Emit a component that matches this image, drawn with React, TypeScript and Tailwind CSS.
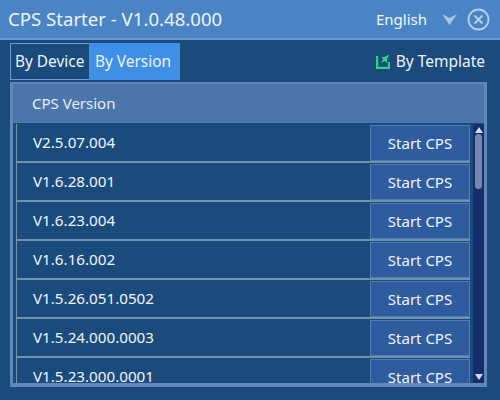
const versions = [
  "V2.5.07.004",
  "V1.6.28.001",
  "V1.6.23.004",
  "V1.6.16.002",
  "V1.5.26.051.0502",
  "V1.5.24.000.0003",
  "V1.5.23.000.0001",
];

function VersionRow({ version }: { version: string }) {
  return (
    <div className="flex h-[39px] shrink-0 border-b-2 border-[#6f94a8]">
      <div className="flex flex-1 items-center pl-[16px] text-[15.2px] text-[#f0f5fb]">{version}</div>
      <button className="mt-px h-[36px] w-[100px] border border-[#4d7db8] bg-[#2f5c9f] text-[15px] text-[#f0f5fb]">
        Start CPS
      </button>
    </div>
  );
}

export default function App() {
  return (
    <div className="flex h-[400px] w-[500px] flex-col overflow-hidden bg-[#1b4a7d] font-['Noto_Sans','Open_Sans',sans-serif]">
      {/* Title bar */}
      <div className="flex h-[40px] shrink-0 items-center border-b-2 border-[#6c9bcf] bg-[#4a84c4] pl-2 pr-[10px]">
        <div className="flex-1 text-[18.6px] text-[#eef4fb]">CPS Starter - V1.0.48.000</div>
        <span className="text-[15px] text-[#f2f7fc]">English</span>
        <svg className="ml-[15px]" width="15" height="11" viewBox="0 0 15 11">
          <path d="M0 0 L7.5 4 L15 0 L7.5 11 Z" fill="#a9c6e6" />
        </svg>
        <svg className="ml-[10px]" width="23" height="23" viewBox="0 0 23 23" fill="none" stroke="#b7cfe9">
          <circle cx="11.5" cy="11.5" r="10" strokeWidth="1.8" />
          <path d="M7.5 7.5 L15.5 15.5 M15.5 7.5 L7.5 15.5" strokeWidth="2" />
        </svg>
      </div>

      {/* Tabs */}
      <div className="flex h-[40px] shrink-0 items-stretch pl-[10px] pr-[15px] pt-[3px]">
        <div className="flex w-[79px] items-center border-b border-l border-t border-[#6c9bcf] pl-[4px] text-[15.4px] text-[#eef4fb]">
          By Device
        </div>
        <div className="flex w-[91px] items-center bg-[#3f8fe6] pl-[6px] text-[15.4px] text-[#eef4fb]">By Version</div>
        <div className="flex flex-1 items-center justify-end text-[15.5px] text-[#eef4fb]">
          <svg className="mr-[6px]" width="14" height="15" viewBox="0 0 14 15" fill="none">
            <path d="M1 2 V14 H13 V8" stroke="#2ed47f" strokeWidth="2.4" />
            <path d="M13.5 0.5 L8 3 L5.5 3 L7 5 L5 9 L9 7 L11 9 L11 5 Z" fill="#2ed47f" />
          </svg>
          By Template
        </div>
      </div>

      {/* Version table */}
      <div className="mx-[10px] mt-[2px] flex h-[305px] w-[477px] flex-col overflow-hidden border-x-[3px] border-b-[4px] border-t-2 border-[#6188b8]">
        <div className="flex h-[39px] shrink-0 items-center bg-[#4a76ab] pl-[19px] text-[15px] text-[#e6eef8]">
          CPS Version
        </div>
        <div className="flex min-h-0 flex-1 pl-[3px] pt-px">
          <div className="flex min-w-0 flex-1 flex-col overflow-hidden border-l border-[#6f94a8]">
            {versions.map((version) => (
              <VersionRow key={version} version={version} />
            ))}
          </div>
          <div className="ml-[3px] flex w-[11px] shrink-0 flex-col items-center bg-[#142f6b] pb-[3px] pt-[3px]">
            <svg width="8" height="6" viewBox="0 0 8 6">
              <path d="M4 0 L8 6 H0 Z" fill="#d4dcec" />
            </svg>
            <div className="mt-[1px] h-[55px] w-[7px] rounded-full bg-[#7b87ae]" />
            <div className="flex-1" />
            <svg width="8" height="6" viewBox="0 0 8 6">
              <path d="M0 0 H8 L4 6 Z" fill="#d4dcec" />
            </svg>
          </div>
        </div>
      </div>
    </div>
  );
}
